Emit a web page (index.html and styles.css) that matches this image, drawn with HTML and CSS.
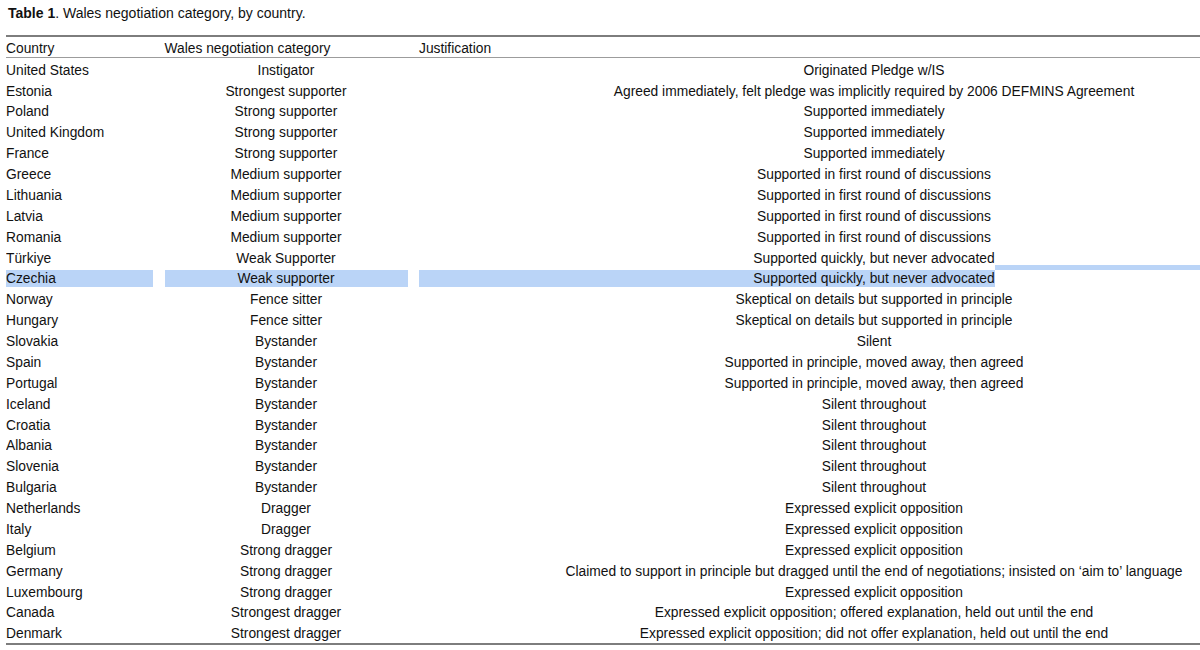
FILE: index.html
```html
<!DOCTYPE html>
<html lang="en">
<head>
<meta charset="utf-8">
<title>Table 1. Wales negotiation category, by country.</title>
<link rel="stylesheet" href="styles.css">
</head>
<body>
<main class="page">
  <p class="caption"><b>Table 1</b>. Wales negotiation category, by country.</p>
  <div class="clip">
    <div class="table">
      <div class="row head">
        <div class="cell">Country</div>
        <div class="cell">Wales negotiation category</div>
        <div class="cell">Justification</div>
      </div>
      <div class="rows">
        <div class="row"><div class="cell">United States</div><div class="cell c">Instigator</div><div class="cell c">Originated Pledge w/IS</div></div>
        <div class="row"><div class="cell">Estonia</div><div class="cell c">Strongest supporter</div><div class="cell c">Agreed immediately, felt pledge was implicitly required by 2006 DEFMINS Agreement</div></div>
        <div class="row"><div class="cell">Poland</div><div class="cell c">Strong supporter</div><div class="cell c">Supported immediately</div></div>
        <div class="row"><div class="cell">United Kingdom</div><div class="cell c">Strong supporter</div><div class="cell c">Supported immediately</div></div>
        <div class="row"><div class="cell">France</div><div class="cell c">Strong supporter</div><div class="cell c">Supported immediately</div></div>
        <div class="row"><div class="cell">Greece</div><div class="cell c">Medium supporter</div><div class="cell c">Supported in first round of discussions</div></div>
        <div class="row"><div class="cell">Lithuania</div><div class="cell c">Medium supporter</div><div class="cell c">Supported in first round of discussions</div></div>
        <div class="row"><div class="cell">Latvia</div><div class="cell c">Medium supporter</div><div class="cell c">Supported in first round of discussions</div></div>
        <div class="row"><div class="cell">Romania</div><div class="cell c">Medium supporter</div><div class="cell c">Supported in first round of discussions</div></div>
        <div class="row"><div class="cell">Türkiye</div><div class="cell c">Weak Supporter</div><div class="cell c">Supported quickly, but never advocated</div></div>
        <div class="row selected">
          <div class="cell"><div class="mark">Czechia</div></div>
          <div class="cell c"><div class="mark">Weak supporter</div></div>
          <div class="cell c"><div class="selline"><span class="lead"></span><span class="txt">Supported quickly, but never advocated</span><span class="tail"></span></div></div>
        </div>
        <div class="row"><div class="cell">Norway</div><div class="cell c">Fence sitter</div><div class="cell c">Skeptical on details but supported in principle</div></div>
        <div class="row"><div class="cell">Hungary</div><div class="cell c">Fence sitter</div><div class="cell c">Skeptical on details but supported in principle</div></div>
        <div class="row"><div class="cell">Slovakia</div><div class="cell c">Bystander</div><div class="cell c">Silent</div></div>
        <div class="row"><div class="cell">Spain</div><div class="cell c">Bystander</div><div class="cell c">Supported in principle, moved away, then agreed</div></div>
        <div class="row"><div class="cell">Portugal</div><div class="cell c">Bystander</div><div class="cell c">Supported in principle, moved away, then agreed</div></div>
        <div class="row"><div class="cell">Iceland</div><div class="cell c">Bystander</div><div class="cell c">Silent throughout</div></div>
        <div class="row"><div class="cell">Croatia</div><div class="cell c">Bystander</div><div class="cell c">Silent throughout</div></div>
        <div class="row"><div class="cell">Albania</div><div class="cell c">Bystander</div><div class="cell c">Silent throughout</div></div>
        <div class="row"><div class="cell">Slovenia</div><div class="cell c">Bystander</div><div class="cell c">Silent throughout</div></div>
        <div class="row"><div class="cell">Bulgaria</div><div class="cell c">Bystander</div><div class="cell c">Silent throughout</div></div>
        <div class="row"><div class="cell">Netherlands</div><div class="cell c">Dragger</div><div class="cell c">Expressed explicit opposition</div></div>
        <div class="row"><div class="cell">Italy</div><div class="cell c">Dragger</div><div class="cell c">Expressed explicit opposition</div></div>
        <div class="row"><div class="cell">Belgium</div><div class="cell c">Strong dragger</div><div class="cell c">Expressed explicit opposition</div></div>
        <div class="row"><div class="cell">Germany</div><div class="cell c">Strong dragger</div><div class="cell c">Claimed to support in principle but dragged until the end of negotiations; insisted on ‘aim to’ language</div></div>
        <div class="row"><div class="cell">Luxembourg</div><div class="cell c">Strong dragger</div><div class="cell c">Expressed explicit opposition</div></div>
        <div class="row"><div class="cell">Canada</div><div class="cell c">Strongest dragger</div><div class="cell c">Expressed explicit opposition; offered explanation, held out until the end</div></div>
        <div class="row"><div class="cell">Denmark</div><div class="cell c">Strongest dragger</div><div class="cell c">Expressed explicit opposition; did not offer explanation, held out until the end</div></div>
      </div>
    </div>
  </div>
</main>
</body>
</html>
```

FILE: styles.css
```css
html, body {
  margin: 0;
  padding: 0;
  background: #ffffff;
}

body {
  font-family: "Liberation Sans", Arial, Helvetica, sans-serif;
  color: #111111;
  overflow: hidden;
}

.page {
  width: 1200px;
  height: 650px;
  overflow: hidden;
}

.caption {
  margin: 5px 0 0 8px;
  font-size: 14px;
  line-height: 17px;
  white-space: nowrap;
}

.caption b {
  font-weight: 700;
}

.clip {
  margin: 13px 0 0 6px;
  width: 1194px;
  overflow: hidden;
}

.table {
  width: 1323px;
  font-size: 13.8px;
  line-height: 17px;
  border-top: 2px solid #7d7d7d;
}

.row {
  display: grid;
  grid-template-columns: 147px 243px 910px;
  column-gap: 11.5px;
}

.cell {
  padding: 3.7px 0 0.2px 0;
  white-space: nowrap;
}

.cell.c {
  text-align: center;
}

.head {
  border-bottom: 1px solid #9c9c9c;
}

.head .cell {
  padding: 3px 0 0 0;
  text-align: left;
}

.rows {
  border-bottom: 2px solid #7d7d7d;
}

.mark {
  background: #bad4f7;
}

.selline {
  display: flex;
}

.selline .lead {
  flex: 1;
  background: #bad4f7;
}

.selline .txt {
  background: #bad4f7;
}

.selline .tail {
  flex: 1;
  position: relative;
}

.selline .tail::after {
  content: "";
  position: absolute;
  left: 0;
  right: 0;
  top: -5px;
  height: 5px;
  background: #bad4f7;
}
```
